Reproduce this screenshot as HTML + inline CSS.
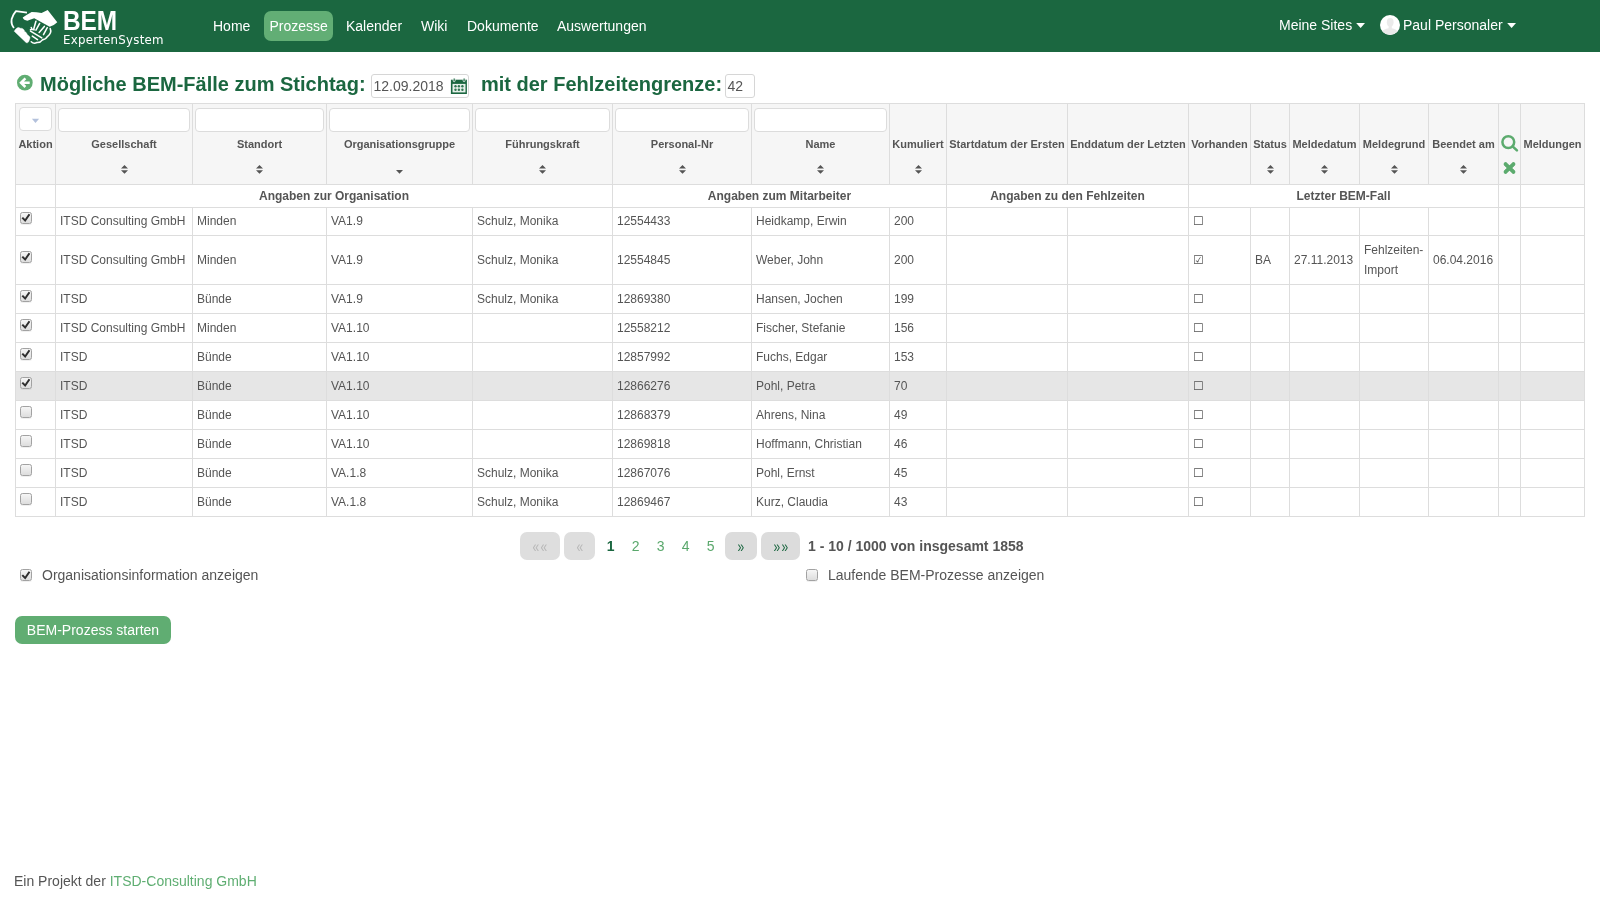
<!DOCTYPE html>
<html lang="de">
<head>
<meta charset="utf-8">
<title>BEM ExpertenSystem</title>
<style>
*{box-sizing:border-box}
html,body{margin:0;padding:0}
body{width:1600px;height:900px;overflow:hidden;background:#fff;font-family:"Liberation Sans",sans-serif;font-size:14px;color:#555;position:relative}
a{text-decoration:none}
#w{position:absolute;left:0;top:0;width:1600px;height:900px;will-change:transform}
/* navbar */
#nav{position:absolute;left:0;top:0;width:1600px;height:52px;background:#1b6740}
#logo{position:absolute;left:5px;top:2px}
#brand1{position:absolute;left:62.5px;top:5.5px;font-family:"Liberation Sans",sans-serif;font-weight:bold;font-size:26.8px;line-height:30px;color:#fff;transform:scaleX(.91);transform-origin:0 0;white-space:nowrap}
#brand2{position:absolute;left:63px;top:32px;letter-spacing:0.25px;font-family:"DejaVu Sans Condensed","DejaVu Sans",sans-serif;font-size:13.1px;line-height:16px;color:#fff;white-space:nowrap}
.nl{position:absolute;top:11px;height:30px;line-height:30px;color:#fff;font-size:14px;white-space:nowrap}
.nl.act{background:#62ae75;border-radius:7px;padding:0 5.5px}
.caret{display:inline-block;vertical-align:middle;margin-left:4.3px;position:relative;top:-0.2px}
#avatar{position:absolute;left:1380px;top:15px}
/* heading */
#h{position:absolute;left:40px;top:72px;font-size:20px;line-height:24px;font-weight:bold;color:#1b6740;white-space:nowrap}
#back{position:absolute;left:15px;top:73px}
.inp{position:absolute;border:1px solid #d6d6d6;border-radius:3px;background:#fff;font-size:14px;color:#555;line-height:22px;padding-left:1.5px}
/* table */
#t{position:absolute;left:15px;top:103px;width:1569px;border-collapse:collapse;table-layout:fixed;font-size:12px;color:#555}
#t td,#t th{border:1px solid #ddd;padding:0;overflow:hidden}
#t thead th{background:#f6f6f6;height:81px;vertical-align:top;text-align:center;font-size:11px;font-weight:bold;color:#555;position:relative}
.fl{position:absolute;left:2px;right:2px;top:4px;height:24px;border:1px solid #dcdcdc;border-radius:4px;background:#fff}
.sel{position:absolute;left:3px;top:3px;width:33px;height:24px;border:1px solid #dcdcdc;border-radius:4px;background:#fff}
.sel svg{position:absolute;left:11px;top:10px}
.ic{position:absolute;left:0;top:30px}
.ht{position:absolute;left:0;right:0;top:33px;line-height:14px;white-space:nowrap}
.srt{position:absolute;left:50%;top:61px;margin-left:-3.5px;width:7px;height:9px}
#t tbody tr.grp td{height:23px;padding:0;text-align:center;font-weight:bold;font-size:12px;color:#555}
#t tbody td{height:29px;padding-left:4px;white-space:nowrap;vertical-align:middle}
#t tbody tr.tall td{height:49px}
#t tbody tr.r1 td{height:28px;padding-bottom:1px}
#t tbody tr.hl td{background:#e6e6e6}
.cb{display:block;width:12px;height:12px;border:1px solid #a2a2a2;border-radius:2.5px;background:linear-gradient(#f6f6f6,#dddddd);margin:0 0 7px 0;position:relative;box-shadow:0 1px 0 rgba(0,0,0,.06)}
.cb.on::after{content:"";position:absolute;left:-1px;top:-1px;width:12px;height:12px;background:#2e2e2e;clip-path:polygon(13% 57%,25% 46%,42% 62%,72% 18%,86% 27%,44% 88%)}
.ub{font-family:"DejaVu Sans",sans-serif;font-size:12px;color:#555}
/* paginator */
.pb{position:absolute;top:532px;height:28px;border-radius:7px;background:#dcdcdc;color:#1b6740;font-size:14px;text-align:center;line-height:29px}
.pb span{display:inline-block;transform:scale(.86,1.14)}
.pb.dis{color:#b8b8b8;background:#dedede}
.pn{position:absolute;top:538px;font-size:14px;line-height:16px;color:#5aa86c}
#pinfo{position:absolute;left:808px;top:538px;font-size:14px;font-weight:bold;line-height:16px;color:#555}
.lbl{position:absolute;font-size:14px;line-height:16px;color:#555;white-space:nowrap}
#btn{position:absolute;left:15px;top:616px;width:156px;height:28px;border-radius:7px;background:#60ad72;color:#fff;font-size:14px;line-height:28px;text-align:center}
#foot{position:absolute;left:14px;top:873px;font-size:14px;line-height:16px;color:#555;white-space:nowrap}
#foot a{color:#5fae72}
</style>
</head>
<body>
<div id="w">
<div id="nav">
  <svg id="logo" width="60" height="48" viewBox="0 0 1125 900">
<path d="M412 198L205 170Q150 230 125 320Q108 410 168 488" fill="none" stroke="#fff" stroke-width="34" stroke-linejoin="round"/>
<path d="M332 292Q400 240 500 186Q590 190 685 204L800 150L980 378Q930 430 838 465L548 305Q480 330 420 350Q350 345 332 292Z" fill="#fff"/>
<path d="M172 548Q200 500 232 484Q262 470 285 492Q320 486 345 510Q365 530 368 552Q395 560 408 590Q415 610 432 625Q470 650 470 672L446 742Q425 775 398 762Z" fill="#fff" stroke="#fff" stroke-width="8" stroke-linejoin="round"/>
<g fill="none" stroke="#fff" stroke-width="29" stroke-linecap="round">
<path d="M580 362L540 500"/><path d="M650 402L580 528"/><path d="M738 458L640 572"/><path d="M792 482L722 612"/>
<path d="M478 545L690 672"/>
<path d="M492 478L505 512L478 520M505 512L545 522"/>
<path d="M848 498Q885 580 790 652Q770 700 702 710Q660 768 597 760Q540 790 492 745"/>
<path d="M512 640L610 705"/>
</g>
</svg>
<div id="brand1">BEM</div>
  <div id="brand2">ExpertenSystem</div>
  <a class="nl" style="left:213px">Home</a>
  <a class="nl act" style="left:264px">Prozesse</a>
  <a class="nl" style="left:346px">Kalender</a>
  <a class="nl" style="left:421px">Wiki</a>
  <a class="nl" style="left:467px">Dokumente</a>
  <a class="nl" style="left:557px">Auswertungen</a>
  <a class="nl" style="left:1279px;top:10px">Meine Sites<svg class="caret" width="10" height="6" viewBox="0 0 10 6"><path d="M0.2 0H9L4.6 5.1Z" fill="#fff"/></svg></a>
  <svg id="avatar" width="20" height="20" viewBox="0 0 20 20"><circle cx="10" cy="10" r="10" fill="#fff"/><clipPath id="ac"><circle cx="10" cy="10" r="10"/></clipPath><g clip-path="url(#ac)" fill="#eaeaea"><ellipse cx="10.2" cy="7.3" rx="3.4" ry="4.2"/><path d="M8.6 10h3.2v3.2c2.5.7 5.2 1.4 6 3.3v4H2.2v-4c.8-1.9 3.6-2.6 6.4-3.3z"/></g></svg>
  <a class="nl" style="left:1403px;top:10px">Paul Personaler<svg class="caret" width="10" height="6" viewBox="0 0 10 6"><path d="M0.2 0H9L4.6 5.1Z" fill="#fff"/></svg></a>
</div>

<svg id="back" width="20" height="20" viewBox="0 0 20 20"><circle cx="9.85" cy="9.65" r="7.85" fill="#60ad72"/><path d="M14.7 9.65H6.9M10.4 5.3L6 9.65L10.4 14" fill="none" stroke="#fff" stroke-width="2.5"/></svg>
<div id="h">Mögliche BEM-Fälle zum Stichtag:<span style="display:inline-block;width:115.4px"></span>mit der Fehlzeitengrenze:</div>
<div class="inp" style="left:371px;top:74px;width:98px;height:24px">12.09.2018</div>
<svg style="position:absolute;left:450px;top:77px" width="18" height="18" viewBox="0 0 18 18"><rect x="0.9" y="2.7" width="16" height="14.3" fill="#1b6740"/><rect x="2.5" y="6.9" width="13" height="8.5" fill="#e6f0ea"/><g fill="#2f7550"><circle cx="5.5" cy="9.3" r="1.2"/><circle cx="8.9" cy="9.3" r="1.2"/><circle cx="12.4" cy="9.3" r="1.2"/><circle cx="5.5" cy="12.7" r="1.2"/><circle cx="8.9" cy="12.7" r="1.2"/><circle cx="12.4" cy="12.7" r="1.2"/></g><rect x="3.2" y="1" width="2" height="3.7" rx="1" fill="#2d7350" stroke="#fff" stroke-width="0.7"/><rect x="13.1" y="1" width="2" height="3.7" rx="1" fill="#2d7350" stroke="#fff" stroke-width="0.7"/></svg>
<div class="inp" style="left:725px;top:74px;width:30px;height:24px">42</div>

<table id="t">
<colgroup>
<col style="width:40px"><col style="width:137px"><col style="width:134px"><col style="width:146px"><col style="width:140px"><col style="width:139px"><col style="width:138px"><col style="width:57px"><col style="width:121px"><col style="width:121px"><col style="width:62px"><col style="width:39px"><col style="width:70px"><col style="width:69px"><col style="width:70px"><col style="width:22px"><col style="width:64px">
</colgroup>
<thead>
<tr>
<th><div class="sel"><svg width="9" height="6" viewBox="0 0 9 6"><path d="M0.9 0.8H8.1L4.5 5Z" fill="#b3c1dc"/></svg></div><div class="ht">Aktion</div></th>
<th><div class="fl"></div><div class="ht">Gesellschaft</div><svg class="srt" viewBox="0 0 7 9"><path d="M0 3.6L3.5 0L7 3.6Z M0 5.2L3.5 8.8L7 5.2Z" fill="#555"/></svg></th>
<th><div class="fl"></div><div class="ht">Standort</div><svg class="srt" viewBox="0 0 7 9"><path d="M0 3.6L3.5 0L7 3.6Z M0 5.2L3.5 8.8L7 5.2Z" fill="#555"/></svg></th>
<th><div class="fl"></div><div class="ht">Organisationsgruppe</div><svg class="srt" viewBox="0 0 7 9" style="top:65.6px"><path d="M0 0L3.5 3.7L7 0Z" fill="#555"/></svg></th>
<th><div class="fl"></div><div class="ht">Führungskraft</div><svg class="srt" viewBox="0 0 7 9"><path d="M0 3.6L3.5 0L7 3.6Z M0 5.2L3.5 8.8L7 5.2Z" fill="#555"/></svg></th>
<th><div class="fl"></div><div class="ht">Personal-Nr</div><svg class="srt" viewBox="0 0 7 9"><path d="M0 3.6L3.5 0L7 3.6Z M0 5.2L3.5 8.8L7 5.2Z" fill="#555"/></svg></th>
<th><div class="fl"></div><div class="ht">Name</div><svg class="srt" viewBox="0 0 7 9"><path d="M0 3.6L3.5 0L7 3.6Z M0 5.2L3.5 8.8L7 5.2Z" fill="#555"/></svg></th>
<th><div class="ht">Kumuliert</div><svg class="srt" viewBox="0 0 7 9"><path d="M0 3.6L3.5 0L7 3.6Z M0 5.2L3.5 8.8L7 5.2Z" fill="#555"/></svg></th>
<th><div class="ht">Startdatum der Ersten</div></th>
<th><div class="ht">Enddatum der Letzten</div></th>
<th><div class="ht">Vorhanden</div></th>
<th><div class="ht">Status</div><svg class="srt" viewBox="0 0 7 9"><path d="M0 3.6L3.5 0L7 3.6Z M0 5.2L3.5 8.8L7 5.2Z" fill="#555"/></svg></th>
<th><div class="ht">Meldedatum</div><svg class="srt" viewBox="0 0 7 9"><path d="M0 3.6L3.5 0L7 3.6Z M0 5.2L3.5 8.8L7 5.2Z" fill="#555"/></svg></th>
<th><div class="ht">Meldegrund</div><svg class="srt" viewBox="0 0 7 9"><path d="M0 3.6L3.5 0L7 3.6Z M0 5.2L3.5 8.8L7 5.2Z" fill="#555"/></svg></th>
<th><div class="ht">Beendet am</div><svg class="srt" viewBox="0 0 7 9"><path d="M0 3.6L3.5 0L7 3.6Z M0 5.2L3.5 8.8L7 5.2Z" fill="#555"/></svg></th>
<th><svg class="ic" viewBox="0 0 22 48" width="22" height="48"><circle cx="9.3" cy="8.1" r="5.9" fill="none" stroke="#5cab6e" stroke-width="2.5"/><path d="M13.6 12.4L17.9 16.4" stroke="#5cab6e" stroke-width="2.6" stroke-linecap="round"/><path d="M5.9 29.4L15.1 38.6M15.1 29.4L5.9 38.6" stroke="#5cab6e" stroke-width="3.5" stroke-linecap="butt"/><path d="M6.4 29.9L14.6 38.1M14.6 29.9L6.4 38.1" stroke="#5cab6e" stroke-width="3.5" stroke-linecap="round"/></svg></th>
<th><div class="ht">Meldungen</div></th>
</tr>
</thead>
<tbody>
<tr class="grp"><td></td><td colspan="4">Angaben zur Organisation</td><td colspan="3">Angaben zum Mitarbeiter</td><td colspan="2">Angaben zu den Fehlzeiten</td><td colspan="5">Letzter BEM-Fall</td><td></td><td></td></tr>
<tr class="r1"><td><span class="cb on"></span></td><td>ITSD Consulting GmbH</td><td>Minden</td><td>VA1.9</td><td>Schulz, Monika</td><td>12554433</td><td>Heidkamp, Erwin</td><td>200</td><td></td><td></td><td><span class="ub">☐</span></td><td></td><td></td><td></td><td></td><td></td><td></td></tr>
<tr class="tall"><td><span class="cb on"></span></td><td>ITSD Consulting GmbH</td><td>Minden</td><td>VA1.9</td><td>Schulz, Monika</td><td>12554845</td><td>Weber, John</td><td>200</td><td></td><td></td><td><span class="ub">☑</span></td><td>BA</td><td>27.11.2013</td><td style="white-space:normal;line-height:20px">Fehlzeiten-<br>Import</td><td>06.04.2016</td><td></td><td></td></tr>
<tr><td><span class="cb on"></span></td><td>ITSD</td><td>Bünde</td><td>VA1.9</td><td>Schulz, Monika</td><td>12869380</td><td>Hansen, Jochen</td><td>199</td><td></td><td></td><td><span class="ub">☐</span></td><td></td><td></td><td></td><td></td><td></td><td></td></tr>
<tr><td><span class="cb on"></span></td><td>ITSD Consulting GmbH</td><td>Minden</td><td>VA1.10</td><td></td><td>12558212</td><td>Fischer, Stefanie</td><td>156</td><td></td><td></td><td><span class="ub">☐</span></td><td></td><td></td><td></td><td></td><td></td><td></td></tr>
<tr><td><span class="cb on"></span></td><td>ITSD</td><td>Bünde</td><td>VA1.10</td><td></td><td>12857992</td><td>Fuchs, Edgar</td><td>153</td><td></td><td></td><td><span class="ub">☐</span></td><td></td><td></td><td></td><td></td><td></td><td></td></tr>
<tr class="hl"><td><span class="cb on"></span></td><td>ITSD</td><td>Bünde</td><td>VA1.10</td><td></td><td>12866276</td><td>Pohl, Petra</td><td>70</td><td></td><td></td><td><span class="ub">☐</span></td><td></td><td></td><td></td><td></td><td></td><td></td></tr>
<tr><td><span class="cb"></span></td><td>ITSD</td><td>Bünde</td><td>VA1.10</td><td></td><td>12868379</td><td>Ahrens, Nina</td><td>49</td><td></td><td></td><td><span class="ub">☐</span></td><td></td><td></td><td></td><td></td><td></td><td></td></tr>
<tr><td><span class="cb"></span></td><td>ITSD</td><td>Bünde</td><td>VA1.10</td><td></td><td>12869818</td><td>Hoffmann, Christian</td><td>46</td><td></td><td></td><td><span class="ub">☐</span></td><td></td><td></td><td></td><td></td><td></td><td></td></tr>
<tr><td><span class="cb"></span></td><td>ITSD</td><td>Bünde</td><td>VA.1.8</td><td>Schulz, Monika</td><td>12867076</td><td>Pohl, Ernst</td><td>45</td><td></td><td></td><td><span class="ub">☐</span></td><td></td><td></td><td></td><td></td><td></td><td></td></tr>
<tr><td><span class="cb"></span></td><td>ITSD</td><td>Bünde</td><td>VA.1.8</td><td>Schulz, Monika</td><td>12869467</td><td>Kurz, Claudia</td><td>43</td><td></td><td></td><td><span class="ub">☐</span></td><td></td><td></td><td></td><td></td><td></td><td></td></tr>
</tbody>
</table>

<div class="pb dis" style="left:520px;width:40px"><span>«</span><span>«</span></div>
<div class="pb dis" style="left:564px;width:31px"><span>«</span></div>
<div class="pn" style="left:606.7px;color:#1b6740;font-weight:bold">1</div>
<div class="pn" style="left:631.7px">2</div>
<div class="pn" style="left:656.7px">3</div>
<div class="pn" style="left:681.7px">4</div>
<div class="pn" style="left:706.7px">5</div>
<div class="pb" style="left:725px;width:32px"><span>»</span></div>
<div class="pb" style="left:761px;width:39px"><span>»</span><span>»</span></div>
<div id="pinfo">1 - 10 / 1000 von insgesamt 1858</div>

<span class="cb on" style="position:absolute;left:20px;top:569px"></span>
<div class="lbl" style="left:42px;top:567px">Organisationsinformation anzeigen</div>
<span class="cb" style="position:absolute;left:806px;top:569px"></span>
<div class="lbl" style="left:828px;top:567px">Laufende BEM-Prozesse anzeigen</div>

<div id="btn">BEM-Prozess starten</div>
<div id="foot">Ein Projekt der <a>ITSD-Consulting GmbH</a></div>
</div>
</body>
</html>
